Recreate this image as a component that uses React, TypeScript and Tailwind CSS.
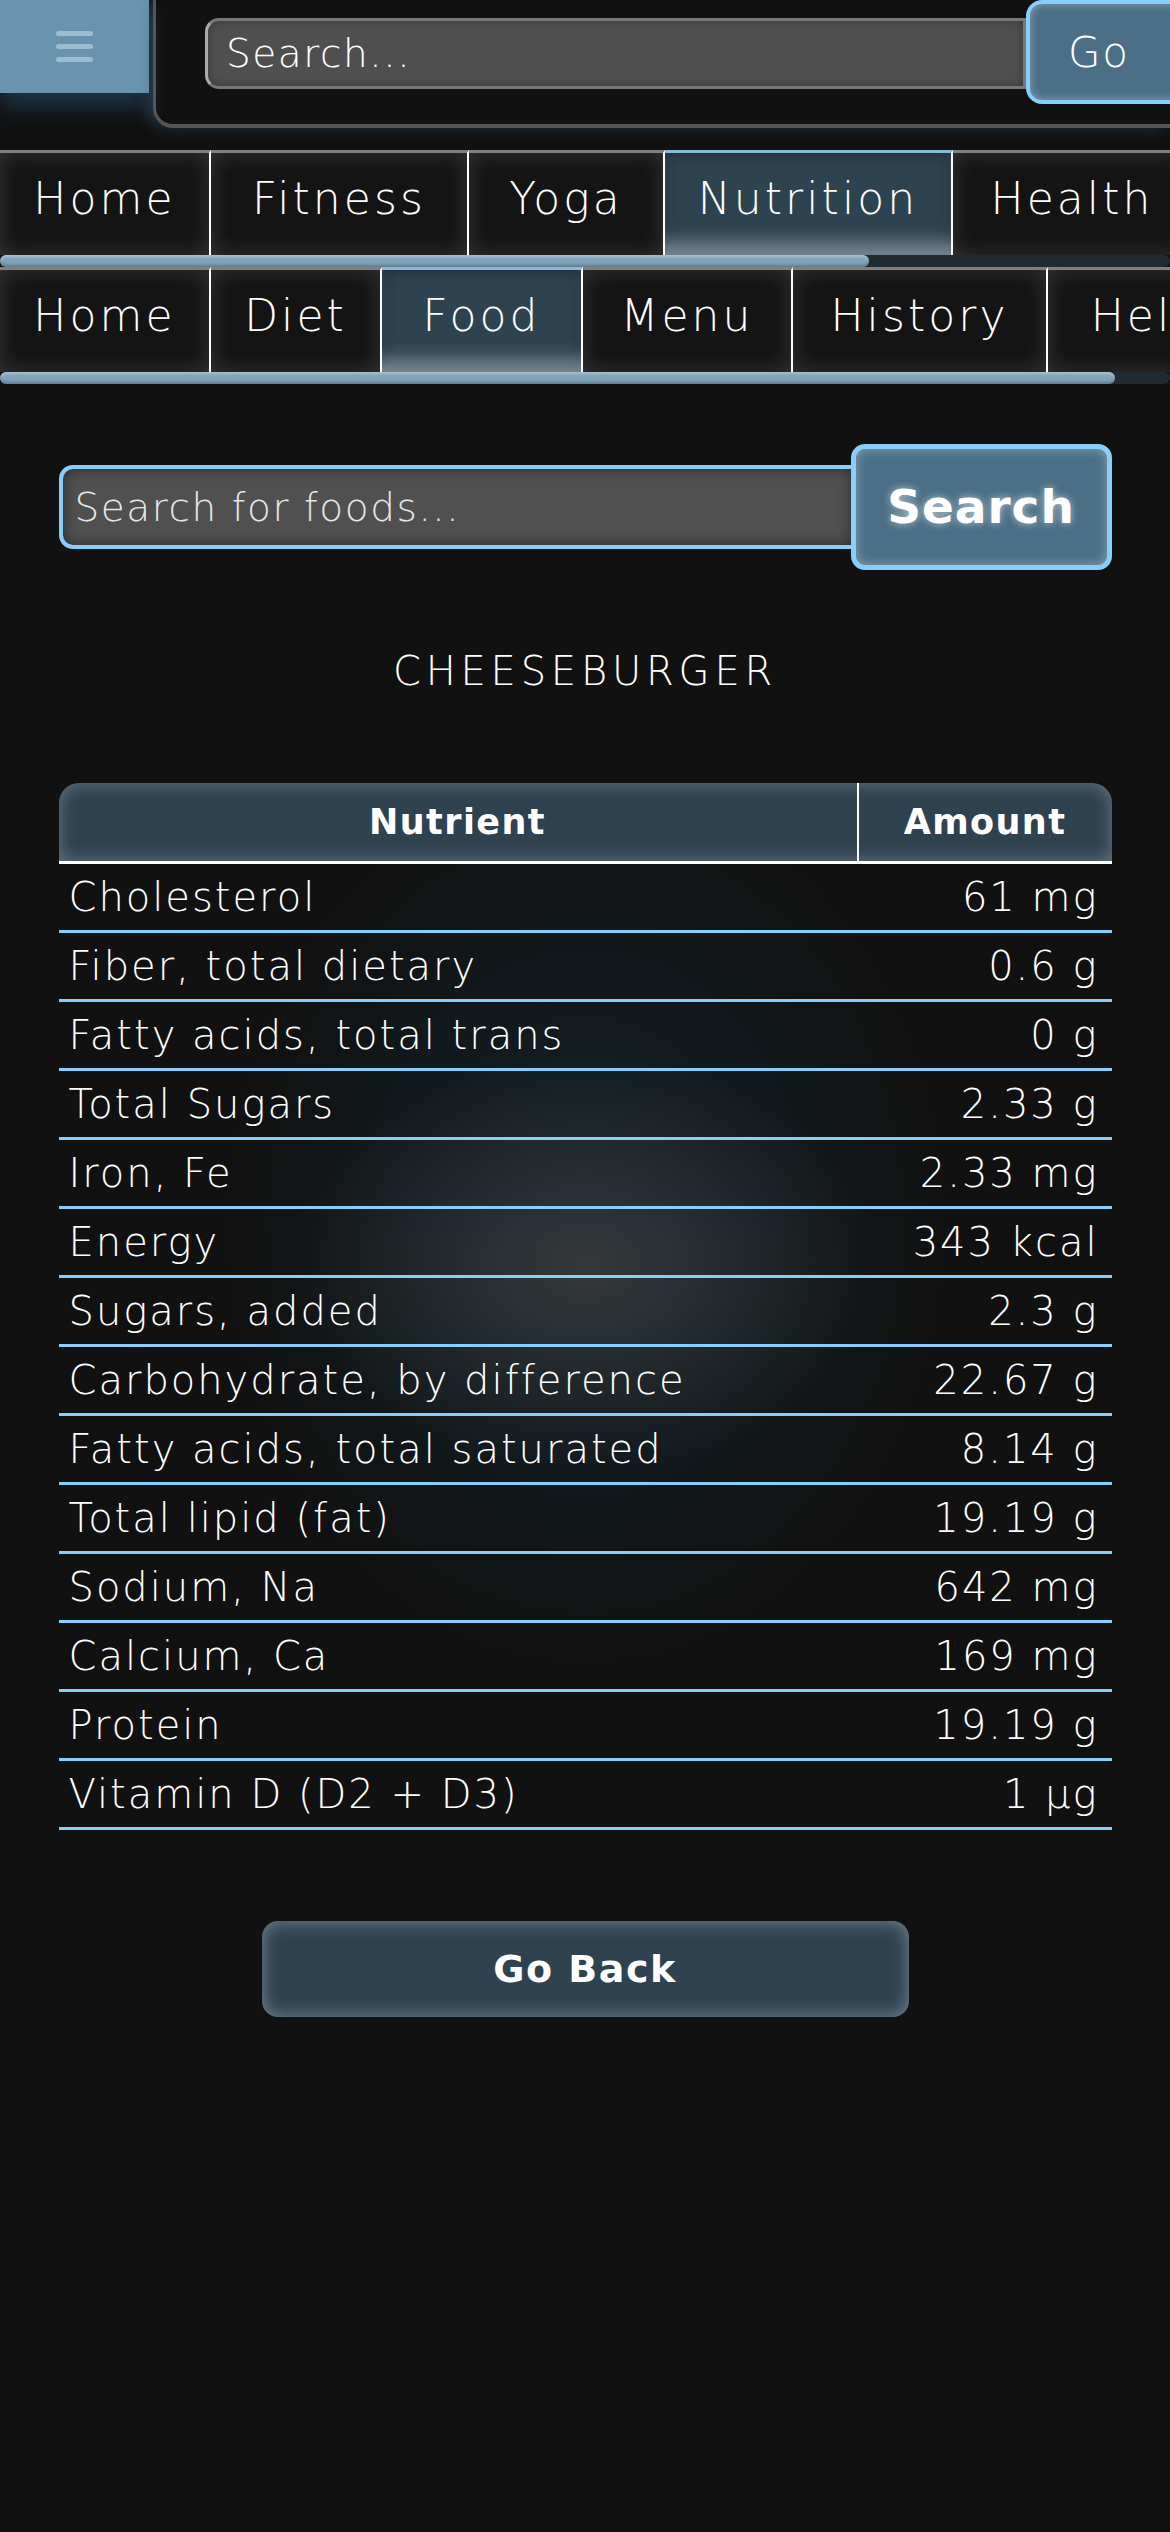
import React from "react";

const nutrients: [string, string][] = [
  ["Cholesterol", "61 mg"],
  ["Fiber, total dietary", "0.6 g"],
  ["Fatty acids, total trans", "0 g"],
  ["Total Sugars", "2.33 g"],
  ["Iron, Fe", "2.33 mg"],
  ["Energy", "343 kcal"],
  ["Sugars, added", "2.3 g"],
  ["Carbohydrate, by difference", "22.67 g"],
  ["Fatty acids, total saturated", "8.14 g"],
  ["Total lipid (fat)", "19.19 g"],
  ["Sodium, Na", "642 mg"],
  ["Calcium, Ca", "169 mg"],
  ["Protein", "19.19 g"],
  ["Vitamin D (D2 + D3)", "1 µg"],
];

const mainNav = [
  { label: "Home", w: "w-[211px]" },
  { label: "Fitness", w: "w-[258px]" },
  { label: "Yoga", w: "w-[196px]" },
  { label: "Nutrition", w: "w-[288px]", active: true },
  { label: "Health", w: "w-[240px]" },
];

const subNav = [
  { label: "Home", w: "w-[211px]" },
  { label: "Diet", w: "w-[171px]" },
  { label: "Food", w: "w-[201px]", active: true },
  { label: "Menu", w: "w-[210px]" },
  { label: "History", w: "w-[255px]" },
  { label: "Help", w: "w-[200px]" },
];

type NavItem = { label: string; w: string; active?: boolean };

function NavRow({ items, thumb }: { items: NavItem[]; thumb: string }) {
  return (
    <div>
      <div className="flex h-[105px] overflow-hidden">
        {items.map((item) => (
          <div
            key={item.label}
            className={`${item.w} shrink-0 h-full flex items-center justify-center border-r-2 border-r-white border-t-[3px] pb-[10px] text-[44px] tracking-[0.07em] text-white ${
              item.active
                ? "border-t-[#87b9d9] bg-[#2e4350] shadow-[inset_0_-22px_18px_-10px_rgba(190,205,215,0.55),inset_0_0_14px_rgba(0,0,0,0.4)]"
                : "border-t-[#808080] bg-[#141414] shadow-[inset_0_0_22px_rgba(255,255,255,0.14)]"
            }`}
          >
            {item.label}
          </div>
        ))}
      </div>
      {/* fake scrollbar */}
      <div className="h-[12px] bg-[#1f2a33] rounded-full">
        <div
          className={`${thumb} h-full rounded-full bg-[#7fa3ba] shadow-[inset_0_2px_3px_rgba(255,255,255,0.35),inset_0_-2px_3px_rgba(0,0,0,0.25)]`}
        />
      </div>
    </div>
  );
}

export default function App() {
  return (
    <div className="min-h-[2532px] w-full bg-[#111111] text-white font-['DejaVu_Sans',sans-serif] font-extralight overflow-hidden">
      {/* Top bar */}
      <div className="flex h-[128px]">
        <div className="w-[149px] h-[93px] shrink-0 bg-[#6a94ae] shadow-[0_14px_20px_rgba(40,80,110,0.55)] flex flex-col items-center justify-center gap-[8px]">
          <div className="w-[37px] h-[5px] rounded-full bg-[#9dbcd0]" />
          <div className="w-[37px] h-[5px] rounded-full bg-[#9dbcd0]" />
          <div className="w-[37px] h-[5px] rounded-full bg-[#9dbcd0]" />
        </div>
        <div className="ml-[4px] flex-1 h-[128px] border-l-[3px] border-b-[4px] border-[#555] rounded-bl-[20px] shadow-[-6px_0_14px_rgba(70,120,160,0.35)] flex items-start pt-[18px] pl-[49px] overflow-hidden">
          <input
            className="w-[821px] h-[71px] shrink-0 bg-[#4f4f4f] border-[3px] border-[#777] border-l-[#aaa] rounded-l-[14px] px-[18px] text-[39px] tracking-[0.04em] text-white placeholder:text-white outline-none shadow-[inset_0_0_10px_rgba(0,0,0,0.3)]"
            placeholder="Search..."
          />
          <button className="-mt-[18px] w-[180px] h-[104px] shrink-0 bg-[#4b6f86] border-4 border-[#87cefa] rounded-[16px] text-[42px] tracking-[0.04em] text-white text-left pl-[38px] shadow-[inset_0_0_10px_rgba(255,255,255,0.35)]">
            Go
          </button>
        </div>
      </div>

      {/* Navigation */}
      <div className="mt-[22px]">
        <NavRow items={mainNav} thumb="w-[869px]" />
        <NavRow items={subNav} thumb="w-[1115px]" />
      </div>

      {/* Food search */}
      <div className="mt-[60px] w-[90%] mx-auto flex items-center">
        <input
          className="flex-1 min-w-0 h-[84px] bg-[#505050] border-4 border-[#87cefa] border-r-0 rounded-l-[14px] px-[12px] text-[39px] tracking-[0.04em] text-white placeholder:text-[#e6e6e6] outline-none shadow-[inset_0_0_14px_rgba(0,0,0,0.45)]"
          placeholder="Search for foods..."
        />
        <button className="w-[261px] h-[126px] shrink-0 bg-[#4a6f86] border-[5px] border-[#87cefa] rounded-[14px] text-[47px] font-bold tracking-[0.02em] text-white [text-shadow:0_0_8px_rgba(255,255,255,0.6)] shadow-[inset_0_0_12px_rgba(255,255,255,0.35)]">
          Search
        </button>
      </div>

      <h2 className="mt-[77px] text-center text-[40px] leading-[48px] tracking-[0.12em] font-extralight">
        CHEESEBURGER
      </h2>

      {/* Nutrient table */}
      <div className="mt-[88px] w-[90%] mx-auto bg-[radial-gradient(ellipse_28%_20%_at_50%_46%,rgba(58,60,62,0.85),transparent),radial-gradient(ellipse_34%_42%_at_50%_42%,rgba(20,48,62,0.55),transparent)]">
        <div className="flex h-[81px] border-b-[3px] border-white rounded-t-[20px] bg-[#2f4250] shadow-[inset_0_0_18px_rgba(140,155,165,0.6)] text-[35px] font-bold tracking-[0.04em]">
          <div className="w-[800px] flex items-center justify-center border-r-2 border-white">
            Nutrient
          </div>
          <div className="flex-1 flex items-center justify-center">Amount</div>
        </div>
        {nutrients.map(([name, amount]) => (
          <div
            key={name}
            className="flex items-center justify-between h-[69px] border-b-[3px] border-[#87cefa] pl-[10px] pr-[13px] text-[40px] tracking-[0.05em]"
          >
            <span>{name}</span>
            <span>{amount}</span>
          </div>
        ))}
      </div>

      <div className="mt-[91px] flex justify-center">
        <button className="w-[647px] h-[96px] rounded-[16px] bg-[#2f4250] shadow-[inset_0_0_18px_rgba(150,165,175,0.7)] text-[38px] font-bold tracking-[0.04em] text-white">
          Go Back
        </button>
      </div>
    </div>
  );
}
